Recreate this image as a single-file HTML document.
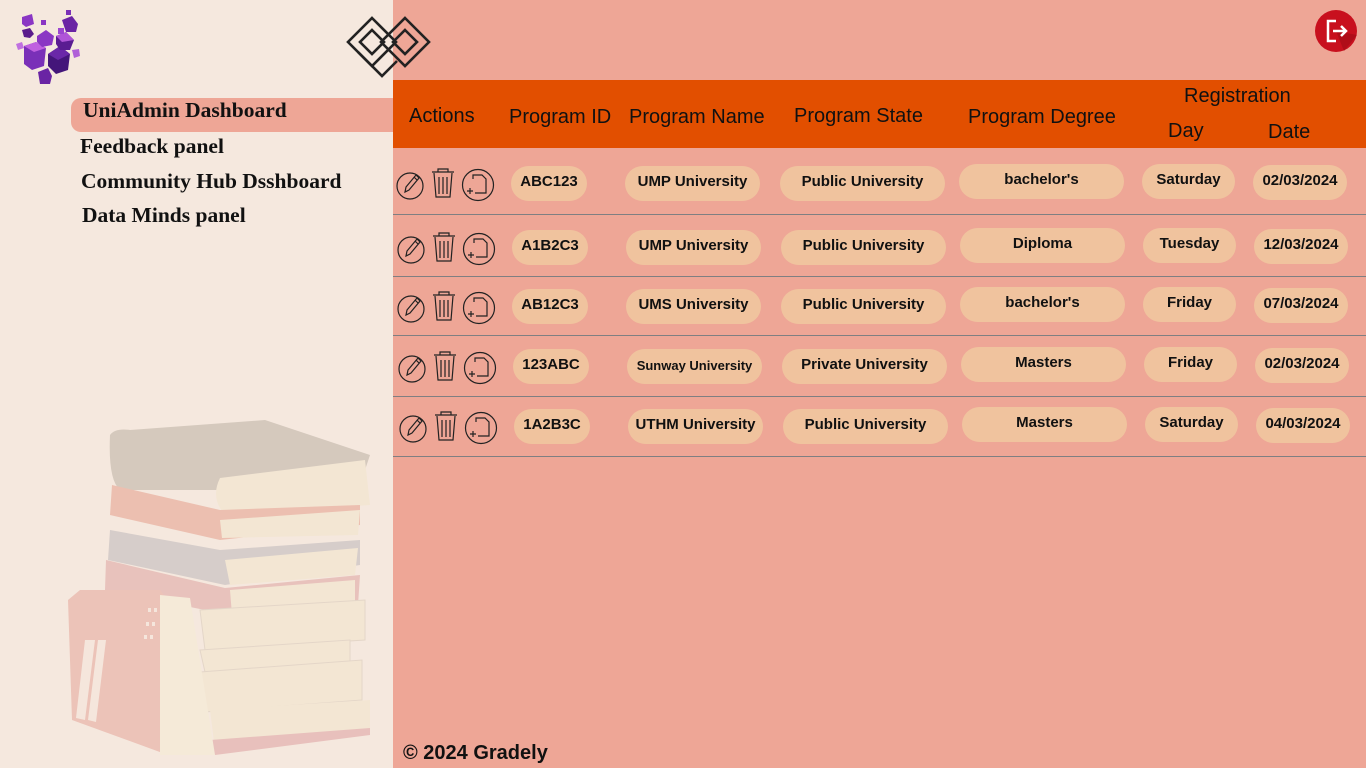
<!DOCTYPE html>
<html><head><meta charset="utf-8">
<style>
*{margin:0;padding:0;box-sizing:border-box}
body{width:1366px;height:768px;overflow:hidden;position:relative;background:#eea696;font-family:"Liberation Sans",sans-serif;color:#111}
#side{position:absolute;left:0;top:0;width:393px;height:768px;background:#f5e8de}
.nav{position:absolute;font-family:"Liberation Serif",serif;font-weight:bold;font-size:21.5px;color:#111}
#active{position:absolute;left:71px;top:98px;width:322px;height:34px;background:#eea696;border-radius:10px 0 0 10px}
#hdr{position:absolute;left:393px;top:80px;width:973px;height:68px;background:#e24f00}
.h{position:absolute;font-size:20px;color:#111}
.line{position:absolute;left:393px;width:973px;height:1px;background:#7f7f82}
.pill{position:absolute;height:35px;background:#f0c39e;border-radius:18px;font-weight:bold;font-size:15px;text-align:center;padding-top:7px;white-space:nowrap}
.ic{position:absolute}
</style></head><body>
<div id="side">
<svg style="position:absolute;left:0;top:0" width="100" height="95" viewBox="0 0 100 95">
<g>
<path d="M24 46 L36 42 L46 48 L44 66 L32 70 L24 64Z" fill="#7a30b8"/><path d="M24 46 L36 42 L46 48 L34 52Z" fill="#c060e0"/>
<path d="M48 54 L60 46 L70 54 L68 70 L56 74 L48 66Z" fill="#44167a"/><path d="M48 54 L60 46 L70 54 L58 60Z" fill="#6a28a8"/>
<path d="M37 36 L46 30 L54 36 L52 45 L42 47 L37 42Z" fill="#8a36c4"/>
<path d="M56 36 L66 32 L74 40 L70 50 L60 50 L56 44Z" fill="#5a1c92"/><path d="M56 36 L66 32 L74 40 L62 42Z" fill="#b055d8"/>
<path d="M22 17 L32 14 L34 24 L26 27 L22 24Z" fill="#8a36c4"/>
<path d="M62 20 L72 16 L78 24 L76 32 L66 32Z" fill="#6a24a4"/>
<path d="M38 72 L48 68 L52 76 L50 84 L40 84Z" fill="#6a24a4"/>
<path d="M22 30 L30 28 L34 34 L30 38 L24 37Z" fill="#5a1c8c"/>
<path d="M16 44 L22 42 L24 48 L18 50Z" fill="#c070e0"/>
<path d="M72 50 L79 49 L80 56 L74 58Z" fill="#b060d8"/>
<rect x="41" y="20" width="5" height="5" fill="#8a36c4"/><rect x="66" y="10" width="5" height="5" fill="#7a30b8"/><rect x="58" y="28" width="6" height="6" fill="#9c46d0"/>
</g></svg>
<svg style="position:absolute;left:60px;top:410px" width="320" height="358" viewBox="0 0 320 358">
<path d="M50 25 Q55 18 70 20 L205 10 L310 45 L305 60 L170 80 L60 80 Q48 70 50 25Z" fill="#d5c9bd"/>
<path d="M160 68 L305 50 L310 95 L165 105 Q150 88 160 68Z" fill="#f3e6d3"/>
<path d="M52 75 L160 100 L300 95 L300 115 L160 130 L50 105Z" fill="#ecbfb0"/>
<path d="M160 110 L300 100 L298 125 L162 128Z" fill="#f3e6d3"/>
<path d="M50 120 L160 140 L300 130 L300 155 L165 175 L48 150Z" fill="#d6cdca"/>
<path d="M165 150 L298 138 L295 165 L170 175Z" fill="#f3e6d3"/>
<path d="M46 150 L165 178 L300 165 L298 195 L170 205 L45 180Z" fill="#e8c2bc"/>
<path d="M170 180 L295 170 L295 200 L172 205Z" fill="#f3e6d3"/>
<path d="M140 200 L305 190 L305 230 L145 240Z" fill="#f3e6d3" stroke="#e4d6c8"/>
<path d="M140 240 L290 230 L290 255 L145 262Z" fill="#f3e6d3" stroke="#e4d6c8"/>
<path d="M140 262 L302 250 L302 290 L145 302Z" fill="#f3e6d3" stroke="#e4d6c8"/>
<path d="M150 300 L310 290 L310 320 L155 340Z" fill="#f3e6d3"/><path d="M150 330 L310 318 L310 325 L155 345Z" fill="#e8c0bc"/>
<path d="M20 180 L100 180 L108 190 L108 345 L12 310 L8 190Z" fill="#ecc3b8"/>
<path d="M100 185 L130 188 L155 345 L100 345Z" fill="#f5ead8"/>
<path d="M25 230 L35 230 L25 310 L16 308Z M38 230 L46 230 L36 312 L28 310Z" fill="#f5e6dc"/>
<rect x="88" y="198" width="3" height="4" fill="#f5e6dc"/><rect x="94" y="198" width="3" height="4" fill="#f5e6dc"/><rect x="86" y="212" width="3" height="4" fill="#f5e6dc"/><rect x="92" y="212" width="3" height="4" fill="#f5e6dc"/><rect x="84" y="225" width="3" height="4" fill="#f5e6dc"/><rect x="90" y="225" width="3" height="4" fill="#f5e6dc"/>
</svg>
<div id="active"></div>
<div class="nav" style="left:83px;top:98px">UniAdmin Dashboard</div>
<div class="nav" style="left:80px;top:134px">Feedback panel</div>
<div class="nav" style="left:81px;top:169px">Community Hub Dsshboard</div>
<div class="nav" style="left:82px;top:203px">Data Minds panel</div>
</div>
<svg style="position:absolute;left:345px;top:14px" width="90" height="66" viewBox="0 0 90 66" fill="none" stroke="#222" stroke-width="2.6">
<path d="M27 4 L51 28 L27 52 L3 28 Z"/>
<path d="M27 16 L39 28 L27 40 L15 28 Z"/>
<path d="M60 4 L84 28 L60 52 L36 28 Z"/>
<path d="M60 16 L72 28 L60 40 L48 28 Z"/>
<path d="M13 38 L37 62 L52 47"/>
</svg>
<svg style="position:absolute;left:1314px;top:9px" width="44" height="44" viewBox="0 0 44 44"><circle cx="22" cy="22" r="21" fill="#c8101e"/><path d="M22 22 L43 26 L30 42 Z" fill="#a00c16" opacity=".6"/><path d="M22 12 H14 V32 H22" stroke="#fff" stroke-width="2.5" fill="none"/><path d="M19 22 H31 M27 17 L32 22 L27 27" stroke="#fff" stroke-width="2.5" fill="none"/></svg>
<div id="hdr"></div>
<div class="h" style="left:409px;top:105px">Actions</div>
<div class="h" style="left:509px;top:106px">Program ID</div>
<div class="h" style="left:629px;top:106px">Program Name</div>
<div class="h" style="left:794px;top:105px">Program State</div>
<div class="h" style="left:968px;top:106px">Program Degree</div>
<div class="h" style="left:1184px;top:85px">Registration</div>
<div class="h" style="left:1168px;top:120px">Day</div>
<div class="h" style="left:1268px;top:121px">Date</div>
<div id="rows"></div>
<div style="position:absolute;left:403px;top:742px;font-weight:bold;font-size:20px">© 2024 Gradely</div>
<script>
var rows=[
[183,0,"ABC123","UMP University","Public University","bachelor's","Saturday","02/03/2024",214],
[247,1,"A1B2C3","UMP University","Public University","Diploma","Tuesday","12/03/2024",276],
[306,1,"AB12C3","UMS University","Public University","bachelor's","Friday","07/03/2024",335],
[366,2,"123ABC","Sunway University","Private University","Masters","Friday","02/03/2024",396],
[426,3,"1A2B3C","UTHM University","Public University","Masters","Saturday","04/03/2024",456]];
var cols=[[511,76],[625,135],[780,165],[959,165],[1142,93],[1253,94]];
var h="";
rows.forEach(function(r,i){
 var c=r[0],o=r[1];
 var ty=[c-17,c-17,c-17,c-19,c-19,c-18];
 cols.forEach(function(col,j){
  var fs=(r[3]=="Sunway University"&&j==1)?"font-size:13px;padding-top:9px;":"";
  h+='<div class="pill" style="left:'+(col[0]+o)+'px;top:'+ty[j]+'px;width:'+col[1]+'px;'+fs+'">'+r[2+j]+'</div>';
 });
 var x=396+o;
 h+='<svg class="ic" style="left:'+x+'px;top:'+(c-17)+'px" width="100" height="36" viewBox="0 0 100 36" fill="none" stroke="#222" stroke-width="1.2">'+
 '<circle cx="14" cy="20" r="13"/><path d="M9 26 L10 21 L20 9 L23 12 L13 24 Z M18 11 L21 14"/>'+
 '<path d="M36 6 H58 M42 6 V3 H52 V6 M38 7 L40 31 H54 L56 7 M43 11 V28 M47 11 V28 M51 11 V28"/>'+
 '<circle cx="82" cy="19" r="15.5"/><path d="M77 13 V9 H86 L90 13 V27 H79 M74 22 V28 M71 25 H77"/></svg>';
 h+='<div class="line" style="top:'+r[8]+'px"></div>';
});
document.getElementById("rows").innerHTML=h;
</script>
</body></html>
